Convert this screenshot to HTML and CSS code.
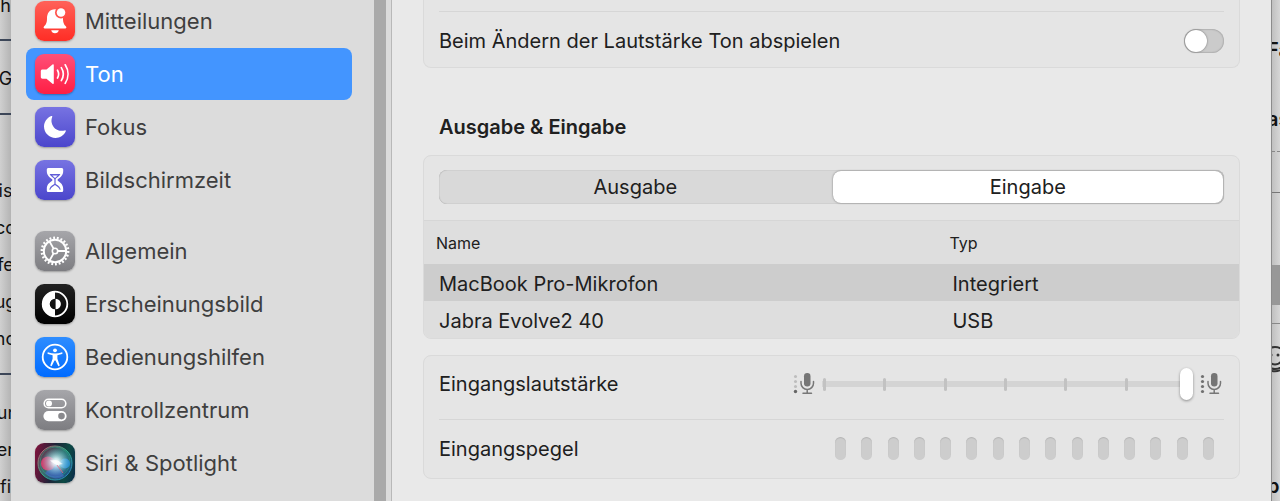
FILE: index.html
```html
<!DOCTYPE html>
<html lang="de">
<head>
  <meta charset="UTF-8">
  <meta name="viewport" content="width=device-width, initial-scale=1.0">
  <title>Ton</title>
  <link rel="stylesheet" href="styles.css">
</head>
<body>
  <div class="desktop">
    <!-- Document behind the window, left edge -->
    <div class="behind behind-left">
      <p>h</p>
      <hr>
      <p>G</p>
      <hr>
      <p class="gap"></p>
      <p>is</p>
      <p>co</p>
      <p>fe</p>
      <p>ug</p>
      <p>no</p>
      <hr>
      <p>ur</p>
      <p>er</p>
      <p>fi</p>
    </div>

    <div class="window">
      <!-- Sidebar -->
      <nav class="sidebar">
        <div class="group">
          <a class="item" href="#mitteilungen">
            <svg class="icon red" viewBox="0 0 40 40">
              <path fill="#fff" d="M20 8.300c-5.500 0-8 4.200-8 9.200 0 4.500-1.300 6.300-3 8-.8.900-.4 2 .8 2h20.400c1.200 0 1.600-1.100.8-2-1.700-1.700-3-3.500-3-8 0-5-2.500-9.200-8-9.200zM16.200 29.300h7.600c-.4 1.900-1.800 3-3.800 3s-3.400-1.100-3.800-3z"/>
              <circle cx="26" cy="11.500" r="6" fill="#ff524b"/>
              <circle cx="26" cy="11.500" r="4.300" fill="#fff"/>
            </svg>
            <span>Mitteilungen</span>
          </a>
          <a class="item active" href="#ton">
            <svg class="icon pink" viewBox="0 0 40 40">
              <path fill="#fff" d="M7.500 15.500h4l6-5c.7-.6 1.300-.2 1.300.6v18c0 .8-.6 1.200-1.300.6l-6-5h-4c-1 0-1.700-.7-1.700-1.700v-5.800c0-1 .7-1.700 1.700-1.700z"/>
              <g fill="none" stroke="#fff" stroke-width="1.700" stroke-linecap="round">
                <path d="M22.500 16.200c1.400 2.400 1.400 5.400 0 7.800M26.300 13.600c2.500 4 2.500 9 0 13M30.200 10.800c3.700 5.700 3.700 12.900 0 18.600"/>
              </g>
            </svg>
            <span>Ton</span>
          </a>
          <a class="item" href="#fokus">
            <svg class="icon indigo" viewBox="0 0 40 40">
              <path fill="#fff" d="M16.200 9.100c.8-.4 1.300.1 1 .9-.8 2-.9 4-.5 5.800 1.300 6 7 9.300 13 7.600.8-.2 1.400.4 1 1.200C28.700 28.700 24.800 31 20.600 31 14.200 31 9 26 9 19.600 9 15 11.900 10.900 16.200 9.100z"/>
            </svg>
            <span>Fokus</span>
          </a>
          <a class="item" href="#bildschirmzeit">
            <svg class="icon indigo" viewBox="0 0 40 40">
              <path fill="#fff" d="M13.500 8h13c1 0 1.700.7 1.700 1.600v1.500c0 4-2.400 6.200-5 7.900-.9.600-.9 1.400 0 2 2.600 1.700 5 4 5 7.900v1.500c0 .9-.7 1.600-1.700 1.600h-13c-1 0-1.700-.7-1.700-1.600v-1.500c0-4 2.400-6.200 5-7.900.9-.6.900-1.400 0-2-2.600-1.700-5-4-5-7.900V9.600c0-.9.700-1.600 1.700-1.600z"/>
              <path fill="#615dd8" d="M14.600 14h10.800c-.8 1.700-2 2.700-3.600 3.800-.8.500-1.200 1.400-1.200 2.200v3.800c2.300 1.800 4.600 2.600 5 6H14.400c.4-3.400 2.700-4.200 5-6V20c0-.8-.4-1.700-1.200-2.200-1.600-1.100-2.800-2.100-3.600-3.800z"/>
              <path fill="#fff" d="M17.200 15.500h5.600L20 18zM15.200 30c.6-2.800 3.200-3.400 4.800-5 1.600 1.600 4.200 2.200 4.800 5z"/>
            </svg>
            <span>Bildschirmzeit</span>
          </a>
        </div>
        <div class="group">
          <a class="item" href="#allgemein">
            <svg class="icon gray" viewBox="0 0 40 40">
              <g fill="none" stroke="#fff">
                <circle cx="20" cy="20" r="13.200" stroke-width="2.400" pathLength="44" stroke-dasharray="1 1"/>
                <circle cx="20" cy="20" r="11.200" stroke-width="2"/>
                <circle cx="20" cy="20" r="2.700" stroke-width="1.600"/>
                <path stroke-width="1.800" d="M22.800 20H31M18.600 17.600l-4.200-7.300M18.600 22.400l-4.200 7.300"/>
              </g>
            </svg>
            <span>Allgemein</span>
          </a>
          <a class="item" href="#erscheinungsbild">
            <svg class="icon black" viewBox="0 0 40 40">
              <circle cx="20" cy="20" r="12.300" fill="none" stroke="#fff" stroke-width="1.800"/>
              <path fill="#fff" d="M20 7.500a12.500 12.500 0 0 0 0 25v-7.200a5.300 5.300 0 0 1 0-10.600zM20.600 14.700a5.300 5.300 0 0 1 0 10.600z"/>
            </svg>
            <span>Erscheinungsbild</span>
          </a>
          <a class="item" href="#bedienungshilfen">
            <svg class="icon blue" viewBox="0 0 40 40">
              <circle cx="20" cy="20" r="12.300" fill="none" stroke="#fff" stroke-width="1.800"/>
              <circle cx="20" cy="13.300" r="1.900" fill="#fff"/>
              <path fill="#fff" d="M13.500 15.400c2 .6 4.200 1 6.500 1s4.500-.4 6.500-1c1.100-.3 1.500 1.200.5 1.500l-4.600 1.300v3.600l2.200 6.200c.3 1.100-1.100 1.600-1.600.6L20.500 23.500h-1L17 28.600c-.5 1-1.900.5-1.600-.6l2.200-6.200v-3.600L13 16.900c-1-.3-.6-1.800.5-1.500z"/>
            </svg>
            <span>Bedienungshilfen</span>
          </a>
          <a class="item" href="#kontrollzentrum">
            <svg class="icon gray" viewBox="0 0 40 40">
              <rect x="9.200" y="9.200" width="21.600" height="8.600" rx="4.300" fill="none" stroke="#fff" stroke-width="1.600"/>
              <circle cx="14" cy="13.500" r="3" fill="#fff"/>
              <rect x="8.400" y="21" width="23.200" height="10.200" rx="5.100" fill="#fff"/>
              <circle cx="26.500" cy="26.100" r="3.300" fill="#89898d"/>
            </svg>
            <span>Kontrollzentrum</span>
          </a>
          <a class="item" href="#siri">
            <svg class="icon siri" viewBox="0 0 40 40">
              <defs>
                <radialGradient id="glow">
                  <stop offset="0" stop-color="#fff"/>
                  <stop offset=".25" stop-color="#e6fbff" stop-opacity=".85"/>
                  <stop offset="1" stop-color="#7fd8e8" stop-opacity="0"/>
                </radialGradient>
                <linearGradient id="ring" x1="0" y1="0" x2="1" y2="1">
                  <stop offset="0" stop-color="#d3566e"/>
                  <stop offset=".5" stop-color="#30b287"/>
                  <stop offset="1" stop-color="#2b77cf"/>
                </linearGradient>
                <linearGradient id="orb" x1="0" y1="0" x2="1" y2="1">
                  <stop offset="0" stop-color="#7b2140"/>
                  <stop offset=".45" stop-color="#3a8f88"/>
                  <stop offset="1" stop-color="#1a4aa0"/>
                </linearGradient>
              </defs>
              <circle cx="20" cy="20" r="17" fill="url(#orb)" opacity=".7"/>
              <circle cx="20" cy="20" r="17" fill="none" stroke="url(#ring)"/>
              <circle cx="20" cy="19" r="15" fill="none" stroke="#2fae87" stroke-width=".7" opacity=".7"/>
              <path fill="#4a6bd0" opacity=".6" d="M20 20l9 13c-6 4-14 3-19-3z"/>
              <circle cx="13" cy="20.500" r="7" fill="#ee3d72" opacity=".8"/>
              <circle cx="30" cy="20.500" r="5" fill="#2b93dd" opacity=".8"/>
              <circle cx="21" cy="19" r="14" fill="url(#glow)"/>
              <path fill="#fff" d="M15 17.500c3-.5 6-1 8 0 2 1 3 3 5 3.500-3 .3-4 .6-5 2-2-2-5-2.500-8-5.500z" opacity=".8"/>
              <path stroke="#f0668a" stroke-width=".8" d="M22 22l6 8"/>
            </svg>
            <span>Siri &amp; Spotlight</span>
          </a>
        </div>
      </nav>
      <div class="gutter"></div>

      <!-- Settings -->
      <main class="content">
        <section class="card card-top">
          <div class="row row-switch">
            <label for="feedback">Beim Ändern der Lautstärke Ton abspielen</label>
            <input class="switch" type="checkbox" role="switch" id="feedback">
          </div>
        </section>

        <h2>Ausgabe &amp; Eingabe</h2>

        <section class="card">
          <div class="segmented">
            <button type="button">Ausgabe</button>
            <button type="button" class="selected">Eingabe</button>
          </div>
          <table class="devices">
            <thead>
              <tr><th>Name</th><th>Typ</th></tr>
            </thead>
            <tbody>
              <tr class="selected"><td>MacBook Pro-Mikrofon</td><td>Integriert</td></tr>
              <tr><td>Jabra Evolve2 40</td><td>USB</td></tr>
            </tbody>
          </table>
        </section>

        <section class="card card-levels">
          <div class="row row-volume">
            <label for="volume">Eingangslautstärke</label>
            <div class="volume">
              <svg class="mic" viewBox="0 0 22 24">
                <g fill="#bdbdbd">
                  <circle cx="2.500" cy="4.500" r="1.500"/>
                  <circle cx="2.500" cy="9.500" r="1.500"/>
                  <circle cx="2.500" cy="14.500" r="1.500"/>
                </g>
                <circle cx="2.500" cy="19.500" r="1.700" fill="#666"/>
                <rect x="11" y="1" width="6.500" height="13.500" rx="3.200" fill="#757575"/>
                <path fill="none" stroke="#777" stroke-width="1.500" stroke-linecap="round" d="M8 9.500v1.700a6.200 6.200 0 0 0 12.500 0V9.500M14.200 17.500v3.500M10 21.200h8.500"/>
              </svg>
              <div class="slider">
                <div class="ticks"><i></i><i></i><i></i><i></i><i></i><i></i><i></i></div>
                <input type="range" id="volume" min="0" max="6" value="6">
              </div>
              <svg class="mic" viewBox="0 0 22 24">
                <g fill="#707070">
                  <circle cx="2.500" cy="4.500" r="1.600"/>
                  <circle cx="2.500" cy="9.500" r="1.600"/>
                  <circle cx="2.500" cy="14.500" r="1.600"/>
                  <circle cx="2.500" cy="19.500" r="1.600"/>
                </g>
                <rect x="11" y="1" width="6.500" height="13.500" rx="3.200" fill="#757575"/>
                <path fill="none" stroke="#777" stroke-width="1.500" stroke-linecap="round" d="M8 9.500v1.700a6.200 6.200 0 0 0 12.500 0V9.500M14.200 17.500v3.500M10 21.200h8.500"/>
              </svg>
            </div>
          </div>
          <div class="row row-level">
            <span id="level-label">Eingangspegel</span>
            <div class="level" role="meter" aria-labelledby="level-label" aria-valuenow="0" aria-valuemin="0" aria-valuemax="15">
              <i></i><i></i><i></i><i></i><i></i><i></i><i></i><i></i><i></i><i></i><i></i><i></i><i></i><i></i><i></i>
            </div>
          </div>
        </section>
      </main>
    </div>

    <!-- Document behind the window, right edge -->
    <div class="behind behind-right">
      <p class="first">Fa</p>
      <p>as</p>
      <div class="dashes"></div>
      <div class="field"></div>
      <div class="line"></div>
      <svg class="smiley" viewBox="0 0 28 28">
        <g fill="none" stroke="#333" stroke-width="2">
          <circle cx="14" cy="12" r="11"/>
          <path d="M7 14c3 6 11 6 14 0M4 20c5 7 15 7 20 0"/>
        </g>
        <circle cx="10" cy="9" r="1.500" fill="#333"/>
        <circle cx="17" cy="9" r="1.500" fill="#333"/>
      </svg>
      <p class="last">be</p>
    </div>
  </div>
</body>
</html>
```

FILE: styles.css
```css
* {
  box-sizing: border-box;
}

body {
  margin: 0;
  font-family: Inter, "Liberation Sans", sans-serif;
  font-size: 20px;
  color: #202020;
  background: #d2d2d2;
  overflow: hidden;
}

.desktop {
  display: grid;
  grid-template-columns: 11px 1fr 9px;
  height: 100vh;
}

/* Edges of the page behind the window */
.behind {
  overflow: hidden;
  color: #111;
  white-space: nowrap;
}

.behind p {
  margin: 0;
  height: 37px;
  line-height: 37px;
}

.behind hr {
  margin: 0;
  border: 0;
  border-top: 2px solid #3c4658;
}

.behind-left {
  background: linear-gradient(90deg, #d0d0d0, #b4b4b4);
  font-size: 18px;
}

.behind-left p {
  display: flex;
  justify-content: center;
}

.behind-left p:first-child {
  margin-top: -13px;
  margin-bottom: 15px;
}

.behind-left p:nth-child(3) {
  margin: 19px 0 16px;
}

.behind-left .gap {
  height: 57px;
}

.behind-left hr:nth-of-type(3) {
  margin: 16px 0 19px;
}

.behind-right {
  background: linear-gradient(90deg, #c0c0c0, #d6d6d6);
  border-left: 1px solid #8c8c8c;
  font-weight: 600;
  text-indent: -5px;
}

.behind-right .first {
  margin: 32px 0;
}

.dashes {
  margin-top: 13px;
  border-top: 1px dashed #888;
}

.field {
  height: 113px;
  margin-top: 40px;
  border-top: 1px solid #777;
  border-bottom: 40px solid #989898;
}

.line {
  margin-top: 18px;
  border-top: 1px solid #888;
}

.smiley {
  display: block;
  width: 28px;
  height: 28px;
  margin: 22px 0 0 -11px;
}

.behind-right .last {
  margin-top: 94px;
}

/* Window */
.window {
  display: grid;
  grid-template-columns: 363px 18px 1fr;
  min-width: 0;
  overflow: hidden;
  background: #e9e9e9;
}

.sidebar {
  display: flex;
  flex-direction: column;
  gap: 19px;
  margin-top: -5px;
  padding: 0 22px 0 15px;
  background: #dcdcdc;
}

.group {
  display: flex;
  flex-direction: column;
  gap: 1px;
}

.item {
  display: flex;
  align-items: center;
  gap: 10px;
  height: 52px;
  padding: 0 9px;
  border-radius: 8px;
  font-size: 22px;
  color: #3f3f3f;
  text-decoration: none;
}

.item.active {
  background: #4395ff;
  color: #fff;
}

.icon {
  width: 40px;
  height: 40px;
  border-radius: 9px;
  box-shadow: 0 1px 2px rgba(0, 0, 0, 0.3);
}

.red {
  background: linear-gradient(#ff6259, #ff2d25);
}

.pink {
  background: linear-gradient(#ff5078, #ff1e44);
}

.indigo {
  background: linear-gradient(#7773e2, #4b46cc);
}

.gray {
  background: linear-gradient(#a6a6aa, #7d7d81);
}

.black {
  background: linear-gradient(#222, #000);
}

.blue {
  background: linear-gradient(#2e8dff, #006bff);
}

.siri {
  background: linear-gradient(100deg, #84123c, #1d2338 45%, #0c4a43 75%, #0b2a4c);
}

.gutter {
  background: #dcdcdc;
  border-left: 12px solid #aaa;
  border-right: 1px solid #b8b8b8;
}

/* Settings pane */
.content {
  padding: 0 31px;
}

.card {
  border: 1px solid #dadada;
  border-radius: 8px;
  background: #e5e5e5;
  overflow: hidden;
}

.card-top {
  border-top: 0;
  border-radius: 0 0 8px 8px;
  padding-top: 11px;
}

.row {
  display: flex;
  align-items: center;
  justify-content: space-between;
  margin: 0 15px;
}

.row-switch {
  height: 56px;
  padding-top: 2px;
  border-top: 1px solid #d6d6d6;
}

.row-volume {
  height: 63px;
  padding-bottom: 6px;
}

.row-level {
  height: 59px;
  border-top: 1px solid #d6d6d6;
}

.switch {
  appearance: none;
  display: flex;
  width: 40px;
  height: 24px;
  margin: 0;
  padding: 1px;
  border-radius: 12px;
  background: #cbcbcb;
  box-shadow: inset 0 0 2px rgba(0, 0, 0, 0.4);
}

.switch::before {
  content: "";
  width: 22px;
  height: 22px;
  border-radius: 50%;
  background: #fff;
  box-shadow: 0 0 2px rgba(0, 0, 0, 0.5);
}

.switch:checked {
  justify-content: flex-end;
  background: #4395ff;
}

h2 {
  margin: 47px 16px 15px;
  font-size: 20px;
  font-weight: 600;
  line-height: 25px;
}

.segmented {
  display: grid;
  grid-template-columns: 1fr 1fr;
  height: 34px;
  margin: 14px 15px 16px;
  border-radius: 8px;
  background: #d9d9d9;
  box-shadow: inset 0 0 1px rgba(0, 0, 0, 0.4);
}

.segmented button {
  padding: 0;
  border: 0;
  border-radius: 8px;
  background: none;
  color: inherit;
  font: inherit;
}

.segmented .selected {
  margin: 1px;
  background: #fff;
  box-shadow: 0 0 2px rgba(0, 0, 0, 0.5);
}

.devices {
  width: 100%;
  border-top: 1px solid #d6d6d6;
  border-collapse: collapse;
  table-layout: fixed;
  background: #dedede;
  text-align: left;
}

.devices th {
  height: 43px;
  padding: 2px 12px 0;
  font-size: 16px;
  font-weight: 400;
}

.devices th:first-child {
  width: 63%;
}

.devices td {
  height: 37px;
  padding: 3px 15px 0;
}

.devices .selected {
  background: #cdcdcd;
}

.card-levels {
  margin-top: 16px;
}

.volume {
  display: flex;
  align-items: center;
  gap: 7px;
  margin-right: 2px;
}

.mic {
  width: 22px;
  height: 24px;
}

.slider {
  display: grid;
  align-items: center;
  width: 371px;
}

/* The track and its ticks share a cell with the range input */
.ticks,
.slider input {
  grid-area: 1 / 1;
}

.ticks {
  display: flex;
  justify-content: space-between;
  padding: 0 5px 0 1px;
  background: linear-gradient(#d4d4d4, #d4d4d4) center / 100% 6px no-repeat;
}

.ticks i {
  width: 3px;
  height: 13px;
  border-radius: 2px;
  background: #c2c2c2;
}

.slider input {
  appearance: none;
  width: 100%;
  height: 32px;
  margin: 0;
  background: none;
}

.slider input::-webkit-slider-thumb {
  appearance: none;
  width: 13px;
  height: 32px;
  border-radius: 7px;
  background: #fff;
  box-shadow: 0 1px 3px rgba(0, 0, 0, 0.4);
}

.level {
  display: flex;
  justify-content: space-between;
  width: 379px;
  margin-right: 10px;
}

.level i {
  width: 11px;
  height: 23px;
  border-radius: 6px;
  background: #cdcdcd;
  box-shadow: inset 0 1px 1px rgba(0, 0, 0, 0.12);
}
```
